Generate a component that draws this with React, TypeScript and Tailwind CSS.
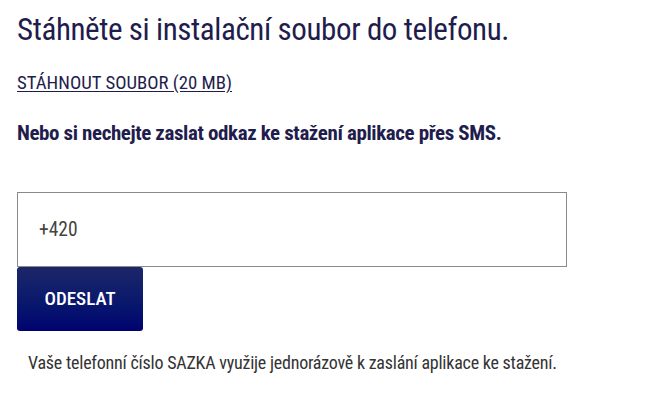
export default function App() {
  const f = { fontFamily: '"Roboto Condensed", Roboto, sans-serif', fontStretch: 'condensed' as const };
  return (
    <div className="w-[666px] h-[404px] bg-white px-[17px] pt-[12px] text-[#1f1d4d]" style={f}>
      <h1 className="text-[31px] leading-[36px] tracking-[-0.4px] font-normal m-0">Stáhněte si instalační soubor do telefonu.</h1>
      <a href="#" className="block mt-[24px] text-[18.8px] leading-[22px] underline underline-offset-2 uppercase w-fit">STÁHNOUT SOUBOR (20 MB)</a>
      <p className="mt-[27px] text-[21px] leading-[24px] tracking-[-0.4px] font-bold">Nebo si nechejte zaslat odkaz ke stažení aplikace přes SMS.</p>
      <div className="mt-[47px] w-[550px] h-[75px] border border-[#8a8a8a] flex items-center px-[21px] text-[19.5px] text-[#444]">+420</div>
      <button className="w-[126px] h-[64px] rounded-[3px] bg-gradient-to-b from-[#1c2668] to-[#010170] text-white text-[19px] font-medium">ODESLAT</button>
      <p className="mt-[21px] ml-[11px] text-[18px] leading-[22px] tracking-[-0.23px] text-[#333]">Vaše telefonní číslo SAZKA využije jednorázově k zaslání aplikace ke stažení.</p>
    </div>
  );
}
